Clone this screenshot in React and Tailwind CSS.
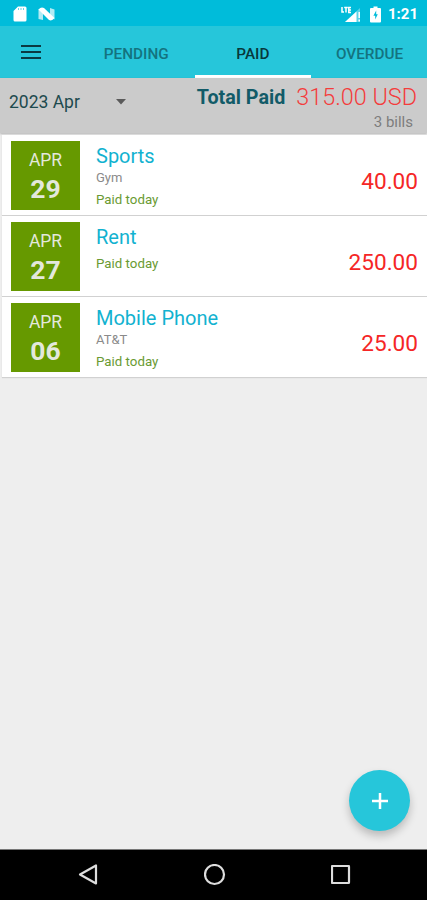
import React, { useState } from 'react';

const TABS = ['PENDING', 'PAID', 'OVERDUE'];

const BILLS = [
  { month: 'APR', day: '29', name: 'Sports', note: 'Gym', status: 'Paid today', amount: 40 },
  { month: 'APR', day: '27', name: 'Rent', note: '', status: 'Paid today', amount: 250 },
  { month: 'APR', day: '06', name: 'Mobile Phone', note: 'AT&T', status: 'Paid today', amount: 25 },
];

const formatAmount = (n) => n.toFixed(2);

function StatusBar() {
  return (
    <div className="flex h-[26px] shrink-0 items-center bg-[#00bcda] pt-[2px] pr-[9px] pl-[13px] text-white">
      {/* sd card */}
      <svg width="14" height="16" viewBox="0 0 14 16">
        <path d="M5 0.5h7a1.5 1.5 0 0 1 1.500 1.500v12a1.500 1.500 0 0 1-1.500 1.500H2a1.500 1.500 0 0 1-1.500-1.500V5z" fill="#fff" />
        <path d="M5.500 2v2M8 2v2M10.500 2v2" stroke="#00bcda" strokeWidth="1" opacity="0.6" />
      </svg>
      {/* nougat */}
      <svg className="ml-[11px]" width="17" height="14" viewBox="0 0 17 14">
        <path d="M0.500 2L5 4v9l-4.500-1zM12 1l4.500 1.500v10l-4.500-2.500z" fill="#fff" opacity="0.7" />
        <path d="M0.500 2.500Q3 -0.500 6 1L16.500 11Q14 14.500 11 13z" fill="#fff" />
      </svg>
      {/* lte signal */}
      <svg className="ml-auto" width="21" height="17" viewBox="0 0 21 17">
        <path d="M1 1v5h2M3.200 1.500h3.600M5 1.500v5M10 1.500H7.800v5H10M8 4h2" fill="none" stroke="#fff" strokeWidth="1.500" />
        <path d="M4 16L19 2v14z" fill="#fff" opacity="0.35" />
        <path d="M4 16L15.500 5.500V16z" fill="#fff" />
        <path d="M18.200 6v6M18.200 13.500v2" stroke="#fff" strokeWidth="1.500" />
      </svg>
      {/* battery */}
      <svg className="ml-[8px]" width="11" height="17" viewBox="0 0 11 17">
        <path d="M3.500 0.500h4V2H10a1 1 0 0 1 1 1v12.500a1 1 0 0 1-1 1H1a1 1 0 0 1-1-1V3a1 1 0 0 1 1-1h2.500z" fill="#fff" />
        <path d="M6.200 4.500L3.400 9.800h1.800V13.500l2.600-5.300H6.200z" fill="#00bcda" />
      </svg>
      <span className="ml-[7px] text-[15px] leading-none font-bold">1:21</span>
    </div>
  );
}

function TabBar({ active, onChange }) {
  return (
    <div className="flex h-[52px] shrink-0 bg-[#26c6da]">
      <button className="flex w-[78px] shrink-0 items-center pl-[21px]" aria-label="menu">
        <svg width="20" height="16" viewBox="0 0 20 16">
          <path d="M0 2h20M0 8h20M0 14h20" stroke="#0b3a42" strokeWidth="2" />
        </svg>
      </button>
      {TABS.map((tab) => (
        <button
          key={tab}
          onClick={() => onChange(tab)}
          className={`w-[116.600px] shrink-0 border-b-[3px] pt-[7px] text-center text-[15.300px] font-medium ${
            tab === active ? 'border-white text-[#08383c]' : 'border-transparent text-[#14737f]'
          }`}
        >
          {tab}
        </button>
      ))}
    </div>
  );
}

function Summary({ total, count }) {
  return (
    <div className="flex h-[55px] shrink-0 justify-between bg-[#cbcbcb] pl-[9px] shadow-[0_1px_2px_rgba(0,0,0,0.25)]">
      <div className="flex h-[48px] items-center">
        <span className="w-[107px] pt-px text-[17.500px] text-[#1d4a4e]">2023 Apr</span>
        <svg width="10" height="6" viewBox="0 0 10 6">
          <path d="M0 0h10L5 5.500z" fill="#5a5a5a" />
        </svg>
      </div>
      <div className="flex flex-col items-end">
        <div className="flex h-[37px] items-center pt-[2px] pr-[10px] whitespace-nowrap">
          <span className="mr-[11px] text-[19.700px] font-bold text-[#125b68]">Total Paid</span>
          <span className="text-[23.400px] font-light text-[#f43c3c]">{formatAmount(total)} USD</span>
        </div>
        <span className="mt-[-2px] pr-[14px] text-[15px] leading-[18px] text-[#7d7d7d]">{count} bills</span>
      </div>
    </div>
  );
}

function BillCard({ bill }) {
  return (
    <div className="flex h-[80px] items-center bg-white pr-[9px] pl-[9px] shadow-[0_1px_1px_rgba(0,0,0,0.12)]">
      <div className="flex h-[69px] w-[69px] shrink-0 flex-col items-center bg-[#669900] pt-[8px] text-[#e3e8dc]">
        <span className="text-[17.500px] leading-[22px]">{bill.month}</span>
        <span className="mt-[3px] text-[26.500px] leading-[30px] font-bold">{bill.day}</span>
      </div>
      <div className="ml-[16px] flex h-full flex-1 flex-col pt-[8px]">
        <span className="text-[20px] leading-[26px] text-[#12b2d0]">{bill.name}</span>
        {bill.note && <span className="text-[13px] leading-[17px] text-[#8a8a8a]">{bill.note}</span>}
        <span className="mt-[5px] text-[13.300px] leading-[17px] text-[#6a9a33]">{bill.status}</span>
      </div>
      <span className="mt-[14px] text-[22.600px] leading-[28px] text-[#f52626]">{formatAmount(bill.amount)}</span>
    </div>
  );
}

function NavBar() {
  return (
    <div className="flex h-[51px] shrink-0 items-center justify-between border-t border-[#777] bg-black pr-[76px] pl-[78px]">
      <svg width="20" height="22" viewBox="0 0 20 22">
        <path d="M18 1.500v18L2 10.500z" fill="none" stroke="#ddd" strokeWidth="2.200" strokeLinejoin="round" />
      </svg>
      <svg width="22" height="22" viewBox="0 0 22 22">
        <circle cx="10.500" cy="10.500" r="9.500" fill="none" stroke="#ddd" strokeWidth="2.200" />
      </svg>
      <svg width="20" height="20" viewBox="0 0 20 20">
        <rect x="1" y="1" width="17" height="17" rx="0.500" fill="none" stroke="#ddd" strokeWidth="2.200" />
      </svg>
    </div>
  );
}

export default function App() {
  const [active, setActive] = useState('PAID');
  const total = BILLS.reduce((sum, b) => sum + b.amount, 0);

  return (
    <div className="relative flex h-[900px] w-[427px] flex-col overflow-hidden bg-[#eeeeee] font-[Roboto,sans-serif]">
      <StatusBar />
      <TabBar active={active} onChange={setActive} />
      <Summary total={total} count={BILLS.length} />

      <div className="flex flex-1 flex-col gap-[1.200px] pt-[2px] pl-[2px]">
        {BILLS.map((bill) => (
          <BillCard key={bill.name} bill={bill} />
        ))}
      </div>

      {/* floating add button */}
      <button
        aria-label="add bill"
        className="absolute right-[17px] bottom-[69px] flex h-[61px] w-[61px] items-center justify-center rounded-full bg-[#26c6da] shadow-[0_5px_8px_rgba(0,0,0,0.22)]"
      >
        <svg width="16" height="16" viewBox="0 0 16 16">
          <path d="M8 0v16M0 8h16" stroke="#fff" strokeWidth="2.500" />
        </svg>
      </button>

      <NavBar />
    </div>
  );
}
